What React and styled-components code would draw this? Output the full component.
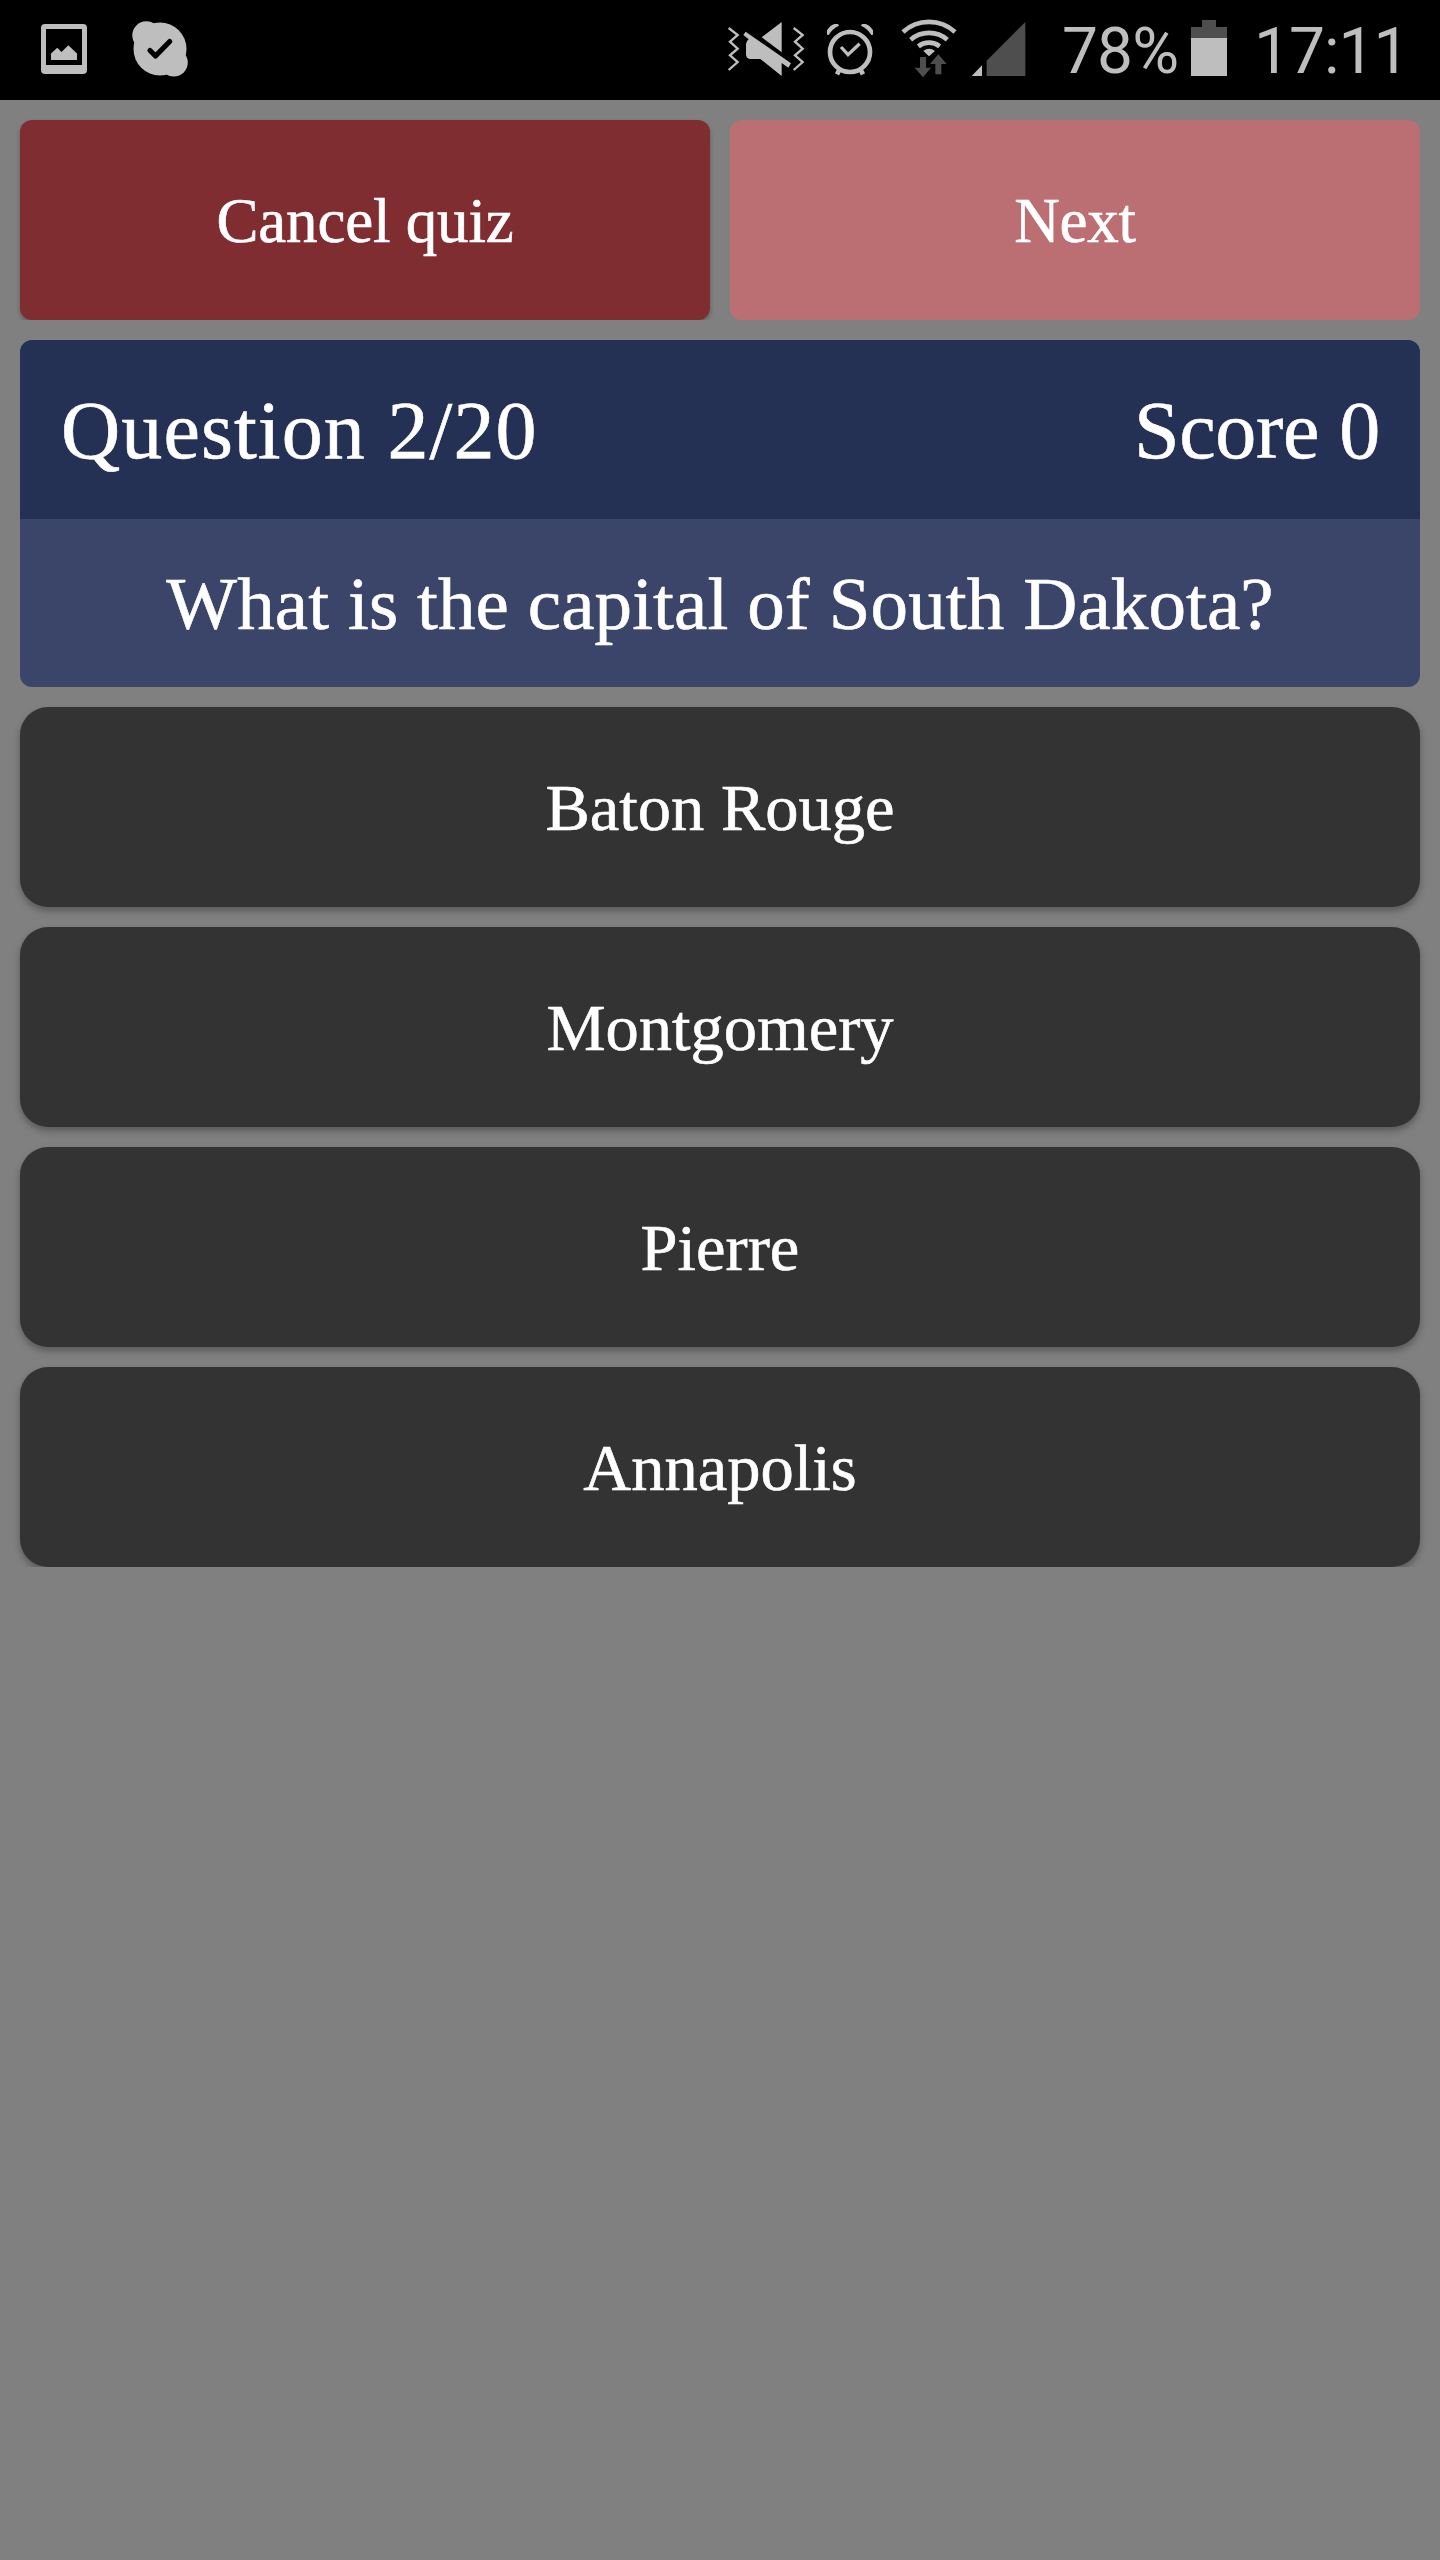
import React, { useState } from 'react';
import styled, { createGlobalStyle } from 'styled-components';

const GlobalStyle = createGlobalStyle`
  body {
    margin: 0;
    background-color: #808080;
  }
`;

const Screen = styled.div`
  width: 1440px;
  height: 2560px;
  display: flex;
  flex-direction: column;
  background-color: #808080;
  color: #fff;
  font-family: 'Liberation Serif', 'Times New Roman', serif;
  overflow: hidden;
`;

const StatusBar = styled.header`
  height: 100px;
  display: flex;
  justify-content: space-between;
  background-color: #000;
  color: #bebebe;
  font-family: Roboto, 'Liberation Sans', sans-serif;
`;

const StatusGroup = styled.div`
  display: flex;
  align-items: center;

  svg {
    display: block;
    flex-shrink: 0;
  }
`;

const StatusText = styled.span`
  width: ${({ $width }) => $width}px;
  font-size: 64px;
  line-height: 100px;
  letter-spacing: ${({ $spacing }) => $spacing || 0}px;
  text-indent: ${({ $indent }) => $indent || 0}px;
  white-space: nowrap;
  padding-top: 4px;
  box-sizing: border-box;
`;

const Actions = styled.div`
  display: flex;
  gap: 20px;
  padding: 20px 20px 0;
  overflow: hidden;
`;

const ActionButton = styled.button`
  flex: 1;
  height: 200px;
  padding: 2px 0 0;
  border: none;
  border-radius: 12px;
  background-color: #7f2d31;
  color: #fff;
  font-family: inherit;
  font-size: 63px;
  letter-spacing: -0.2px;
  -webkit-text-stroke: 0.6px #fff;
  box-shadow: 0 3px 5px rgba(0, 0, 0, 0.25);
  cursor: pointer;

  &:disabled {
    background-color: #bb6f73;
    box-shadow: none;
    cursor: default;
  }
`;

const QuestionCard = styled.section`
  margin: 20px 20px 0;
  border-radius: 12px;
  overflow: hidden;
  -webkit-text-stroke: 0.6px #fff;
`;

const CardHeader = styled.div`
  height: 179px;
  padding: 2px 40px 0 41px;
  box-sizing: border-box;
  display: flex;
  justify-content: space-between;
  align-items: center;
  background-color: #253154;
  font-size: 82px;
`;

const Progress = styled.span`
  letter-spacing: 1.1px;
`;

const Score = styled.span`
  letter-spacing: -0.3px;
`;

const QuestionText = styled.div`
  height: 168px;
  padding-top: 2px;
  box-sizing: border-box;
  display: flex;
  justify-content: center;
  align-items: center;
  background-color: #3b4469;
  font-size: 75px;
  letter-spacing: 0.1px;
`;

const AnswerList = styled.div`
  display: flex;
  flex-direction: column;
  gap: 20px;
  padding: 20px 20px 0;
  overflow: hidden;
`;

const Answer = styled.button`
  height: 200px;
  padding: 1px 0 0;
  border: none;
  border-radius: 28px;
  background-color: #333;
  color: #fff;
  font-family: inherit;
  font-size: 66.5px;
  -webkit-text-stroke: 0.6px #fff;
  box-shadow: 0 4px 7px rgba(0, 0, 0, 0.3);
  cursor: pointer;
`;

const light = '#bebebe';
const dark = '#4e4e4e';

const PictureIcon = () => (
  <svg width="91" height="100" viewBox="0 0 91 100">
    <path
      fill={light}
      fillRule="evenodd"
      d="M45 24h38a4 4 0 0 1 4 4v42a4 4 0 0 1-4 4H45a4 4 0 0 1-4-4V28a4 4 0 0 1 4-4zM46 29v36h36V29z"
    />
    <path fill={light} d="M51 60V53.5L57.3 47.7L61.5 52L68.3 45.3L77 53.5V60z" />
  </svg>
);

const SkypeIcon = () => (
  <svg width="105" height="100" viewBox="91 0 105 100">
    <g fill={light}>
      <circle cx="160" cy="49" r="26.5" />
      <circle cx="146.3" cy="35.3" r="14" />
      <circle cx="173.8" cy="62.6" r="14" />
    </g>
    <path
      d="M150 50.5L155.5 56L169.7 41.5"
      fill="none"
      stroke="#000"
      strokeWidth="5.2"
      strokeLinecap="round"
      strokeLinejoin="round"
    />
  </svg>
);

const MuteIcon = () => (
  <svg width="90" height="100" viewBox="45 0 270 300">
    <g fill="none" stroke={light} strokeWidth="7">
      <path d="M56 84L83 105L60 125L83 146L60 166L83 186L56 210" />
      <path d="M251 84L278 105L255 125L278 146L255 166L278 186L251 210" />
    </g>
    <path fill={light} d="M155 112L215 66V157z" />
    <path
      fill={light}
      d="M107 95L243 190L235 203L215 189V228L151 177H122Q108 177 108 163V132Q108 124 116 118L100 105z"
    />
  </svg>
);

const AlarmIcon = () => (
  <svg width="60" height="100" viewBox="330 0 180 300">
    <g fill="none" stroke={light}>
      <circle cx="420" cy="156" r="60" strokeWidth="14" />
      <path d="M393 141L414 164L449 131" strokeWidth="10" />
      <path d="M390 206L381 223M450 206L459 223" strokeWidth="14" />
    </g>
    <path fill={light} d="M351 104V91Q361 75 374 72H384L387 77Q366 87 356 105z" />
    <path fill={light} d="M489 104V91Q479 75 466 72H456L453 77Q474 87 484 105z" />
  </svg>
);

const WifiIcon = () => (
  <svg width="60" height="100" viewBox="568 0 180 300">
    <g fill="none" stroke={light} strokeWidth="14">
      <path d="M580 96A116 116 0 0 1 736 96" />
      <path d="M603 119A84 84 0 0 1 713 119" />
      <path d="M626 139A52 52 0 0 1 690 139" />
    </g>
    <path fill={light} d="M641 153Q658 140 676 153L658 169z" />
    <path fill={dark} d="M631 171H649V203H664L640 232L615 203H631z" />
    <path fill={dark} d="M677 223V192H661L686 163L711 192H695V223z" />
  </svg>
);

const SignalIcon = () => (
  <svg width="65" height="100" viewBox="770 0 195 300">
    <path fill={light} d="M787 228L818 196V228z" />
    <path fill={dark} d="M832 228V182L948 66V228z" />
  </svg>
);

const BatteryIcon = () => (
  <svg width="36" height="100" viewBox="0 0 36 100">
    <path fill={dark} d="M11 20h14v7h11v11H0V27h11z" />
    <path fill={light} d="M0 38h36v38H0z" />
  </svg>
);

const SystemIcons = styled.div`
  display: flex;
  gap: 9px;
  margin-right: 30px;

  svg:nth-child(2) {
    margin-left: -4px;
  }

  svg:nth-child(3) {
    margin-left: 10px;
  }

  svg:nth-child(4) {
    margin-left: -2px;
  }
`;

const answers = ['Baton Rouge', 'Montgomery', 'Pierre', 'Annapolis'];

function App() {
  const [selected, setSelected] = useState(null);

  return (
    <>
      <GlobalStyle />
      <Screen>
        <StatusBar>
          <StatusGroup>
            <PictureIcon />
            <SkypeIcon />
          </StatusGroup>
          <StatusGroup>
            <SystemIcons>
              <MuteIcon />
              <AlarmIcon />
              <WifiIcon />
              <SignalIcon />
            </SystemIcons>
            <StatusText $width={130} $spacing={-0.9} $indent={1}>78%</StatusText>
            <BatteryIcon />
            <StatusText $width={213} $spacing={-1} $indent={27}>17:11</StatusText>
          </StatusGroup>
        </StatusBar>
        <Actions>
          <ActionButton onClick={() => setSelected(null)}>Cancel quiz</ActionButton>
          <ActionButton disabled={selected === null}>Next</ActionButton>
        </Actions>
        <QuestionCard>
          <CardHeader>
            <Progress>Question 2/20</Progress>
            <Score>Score 0</Score>
          </CardHeader>
          <QuestionText>What is the capital of South Dakota?</QuestionText>
        </QuestionCard>
        <AnswerList>
          {answers.map((answer) => (
            <Answer key={answer} onClick={() => setSelected(answer)}>
              {answer}
            </Answer>
          ))}
        </AnswerList>
      </Screen>
    </>
  );
}

export default App;
